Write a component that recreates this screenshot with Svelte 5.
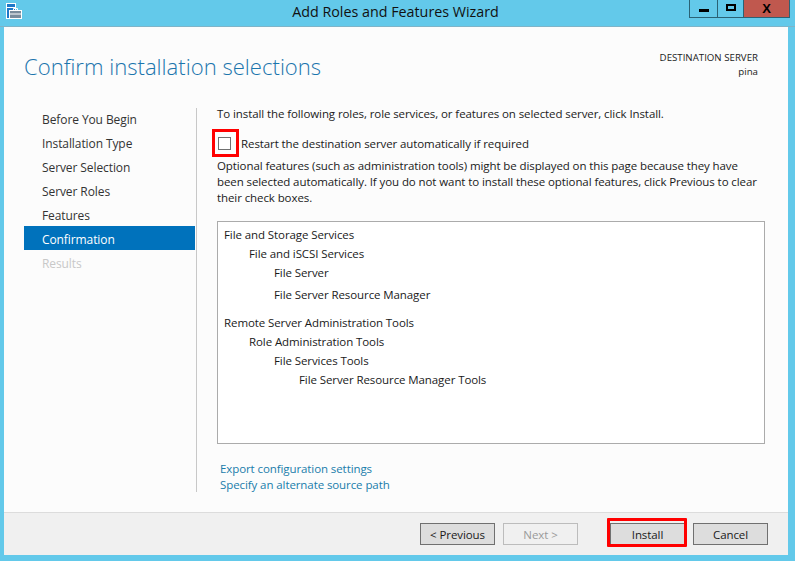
<script>
  const steps = ['Before You Begin', 'Installation Type', 'Server Selection', 'Server Roles', 'Features', 'Confirmation', 'Results'];
  const current = 'Confirmation';

  const selections = [
    { label: 'File and Storage Services', level: 0, h: 19 },
    { label: 'File and iSCSI Services', level: 1, h: 19 },
    { label: 'File Server', level: 2, h: 22 },
    { label: 'File Server Resource Manager', level: 2, h: 28 },
    { label: 'Remote Server Administration Tools', level: 0, h: 19 },
    { label: 'Role Administration Tools', level: 1, h: 19 },
    { label: 'File Services Tools', level: 2, h: 19 },
    { label: 'File Server Resource Manager Tools', level: 3, h: 19 }
  ];
</script>

<div class="window">
  <header class="titlebar">
    <svg class="app-icon" width="23" height="20" viewBox="0 0 23 20">
      <rect x="6.5" y="3.5" width="9" height="15" fill="#1e78c8" stroke="#fff" />
      <rect x="7" y="7" width="8" height="1" fill="#fff" />
      <rect x="9.5" y="10.5" width="12" height="8" fill="#7a8c9c" stroke="#fff" />
      <path d="M13.5 10.5v-2h4v2M9.5 14h12" fill="none" stroke="#fff" />
    </svg>
    <span class="title">Add Roles and Features Wizard</span>
    <div class="controls">
      <span class="ctl min"><i></i></span>
      <span class="ctl max"><i></i></span>
      <span class="ctl close">X</span>
    </div>
  </header>

  <div class="client">
    <div class="head">
      <h1>Confirm installation selections</h1>
      <div class="dest">
        <div>DESTINATION SERVER</div>
        <div>pina</div>
      </div>
    </div>

    <div class="body">
      <nav>
        {#each steps as step, i}
          <div class="step" class:active={step === current} class:off={i > steps.indexOf(current)}>{step}</div>
        {/each}
      </nav>

      <main>
        <p class="intro">To install the following roles, role services, or features on selected server, click Install.</p>
        <div class="restart">
          <span class="mark"><span class="check"></span></span>
          <span>Restart the destination server automatically if required</span>
        </div>
        <p class="note">Optional features (such as administration tools) might be displayed on this page because they have been selected automatically. If you do not want to install these optional features, click Previous to clear their check boxes.</p>

        <div class="list">
          {#each selections as row}
            <div class="row" style="padding-left: {row.level * 25}px; height: {row.h}px">{row.label}</div>
          {/each}
        </div>

        <div class="links">
          <span>Export configuration settings</span>
          <span>Specify an alternate source path</span>
        </div>
      </main>
    </div>

    <footer>
      <button class="btn">&lt; Previous</button>
      <button class="btn" disabled>Next &gt;</button>
      <span class="install"><button class="btn">Install</button></span>
      <button class="btn">Cancel</button>
    </footer>
  </div>
</div>

<style>
  :global(body) {
    margin: 0;
    background: #63c9ea;
    font-family: "Open Sans", "Noto Sans", sans-serif;
    font-size: 11.5px;
    letter-spacing: -0.09px;
    color: #1a1a1a;
  }

  .window {
    width: 795px;
    height: 561px;
    display: flex;
    flex-direction: column;
    overflow: hidden;
  }

  .titlebar {
    height: 26px;
    flex: none;
    display: flex;
    position: relative;
    background: #63c9ea;
    border-bottom: 1px solid #7fb4c8;
  }

  .app-icon {
    position: absolute;
    left: 0;
    top: 0;
  }

  .title {
    width: 100%;
    text-align: center;
    font-size: 14.3px;
    letter-spacing: 0;
    line-height: 24px;
    color: #111;
    padding-right: 4px;
  }

  .controls {
    position: absolute;
    top: 0;
    left: 689px;
    display: flex;
    height: 17px;
    border: 1px solid #2a6275;
    border-top: 0;
  }

  .ctl {
    display: flex;
    align-items: center;
    justify-content: center;
    height: 17px;
  }

  .min {
    width: 27px;
    border-right: 1px solid #2a6275;
  }

  .min i {
    width: 10px;
    height: 3px;
    margin-top: 3px;
    background: #000;
  }

  .max {
    width: 25px;
    border-right: 1px solid #2a6275;
  }

  .max i {
    width: 6px;
    height: 3px;
    margin-top: -3px;
    border: 2px solid #000;
  }

  .close {
    width: 45px;
    background: #c0584e;
    font: bold 13px "Liberation Sans", sans-serif;
    color: #000;
  }

  .client {
    flex: none;
    width: 784px;
    height: 528px;
    margin-left: 4px;
    background: #fcfcfc;
    display: flex;
    flex-direction: column;
  }

  .head {
    height: 81px;
    flex: none;
    display: flex;
    justify-content: space-between;
  }

  h1 {
    margin: 22px 0 0 20px;
    font-size: 22.1px;
    letter-spacing: 0;
    line-height: 34px;
    font-weight: 300;
    color: #1b75ad;
  }

  .dest {
    margin: 24px 30px 0 0;
    text-align: right;
    font-size: 9.7px;
    letter-spacing: 0;
    line-height: 14px;
  }

  .body {
    flex: 1;
    display: flex;
    min-height: 0;
  }

  nav {
    margin-left: 20px;
    height: 384px;
    border-right: 1px solid #c8c8c8;
    box-sizing: border-box;
    width: 173px;
    font-size: 12px;
  }

  .step {
    height: 24px;
    line-height: 28px;
    padding-left: 18px;
    margin-right: 1px;
    color: #333;
    position: relative;
    top: -2px;
  }

  .step.active {
    background: #0072bc;
    color: #fff;
  }

  .step.off {
    color: #c8c8c8;
  }

  main {
    margin-left: 20px;
    width: 548px;
  }

  p {
    margin: 0;
    line-height: 16px;
  }

  .intro {
    margin-top: -2px;
    color: #222;
  }

  .restart {
    display: flex;
    align-items: center;
    height: 28px;
    margin-top: 7px;
    gap: 2px;
    margin-left: -5px;
  }

  .mark {
    border: 3px solid #f00;
    box-sizing: border-box;
    width: 27px;
    height: 28px;
    padding-left: 3px;
    display: flex;
    align-items: center;
  }

  .check {
    width: 11px;
    height: 11px;
    border: 1px solid #707070;
    background: #fff;
  }

  .note {
    padding-top: 1px;
  }

  .list {
    margin-top: 15px;
    height: 223px;
    box-sizing: border-box;
    border: 1px solid #ababab;
    background: #fff;
    padding: 4px 6px;
  }

  .row {
    line-height: 18px;
  }

  .links {
    display: flex;
    flex-direction: column;
    margin: 17px 0 0 3px;
    line-height: 16px;
    color: #1a7dab;
  }

  footer {
    height: 43px;
    flex: none;
    box-sizing: border-box;
    border-top: 1px solid #dcdcdc;
    background: #f0f0f0;
    display: flex;
    align-items: center;
    padding: 0 20px 0 416px;
  }

  .btn {
    width: 75px;
    height: 22px;
    padding: 0;
    border: 1px solid #707070;
    background: #dddddd;
    font: inherit;
    letter-spacing: inherit;
    color: #1a1a1a;
  }

  .btn:disabled {
    color: #9a9a9a;
    border-color: #bcbcbc;
    background: #f0f0f0;
  }

  .btn + .btn {
    margin-left: 8px;
  }

  .install {
    display: flex;
    position: relative;
    margin: 0 8px 0 32px;
  }

  /* red annotation box drawn over the button */
  .install::after {
    content: "";
    position: absolute;
    left: -3px;
    top: -5px;
    width: 80px;
    height: 29px;
    box-sizing: border-box;
    border: 3px solid #f00;
    border-radius: 1px;
    pointer-events: none;
  }
</style>
